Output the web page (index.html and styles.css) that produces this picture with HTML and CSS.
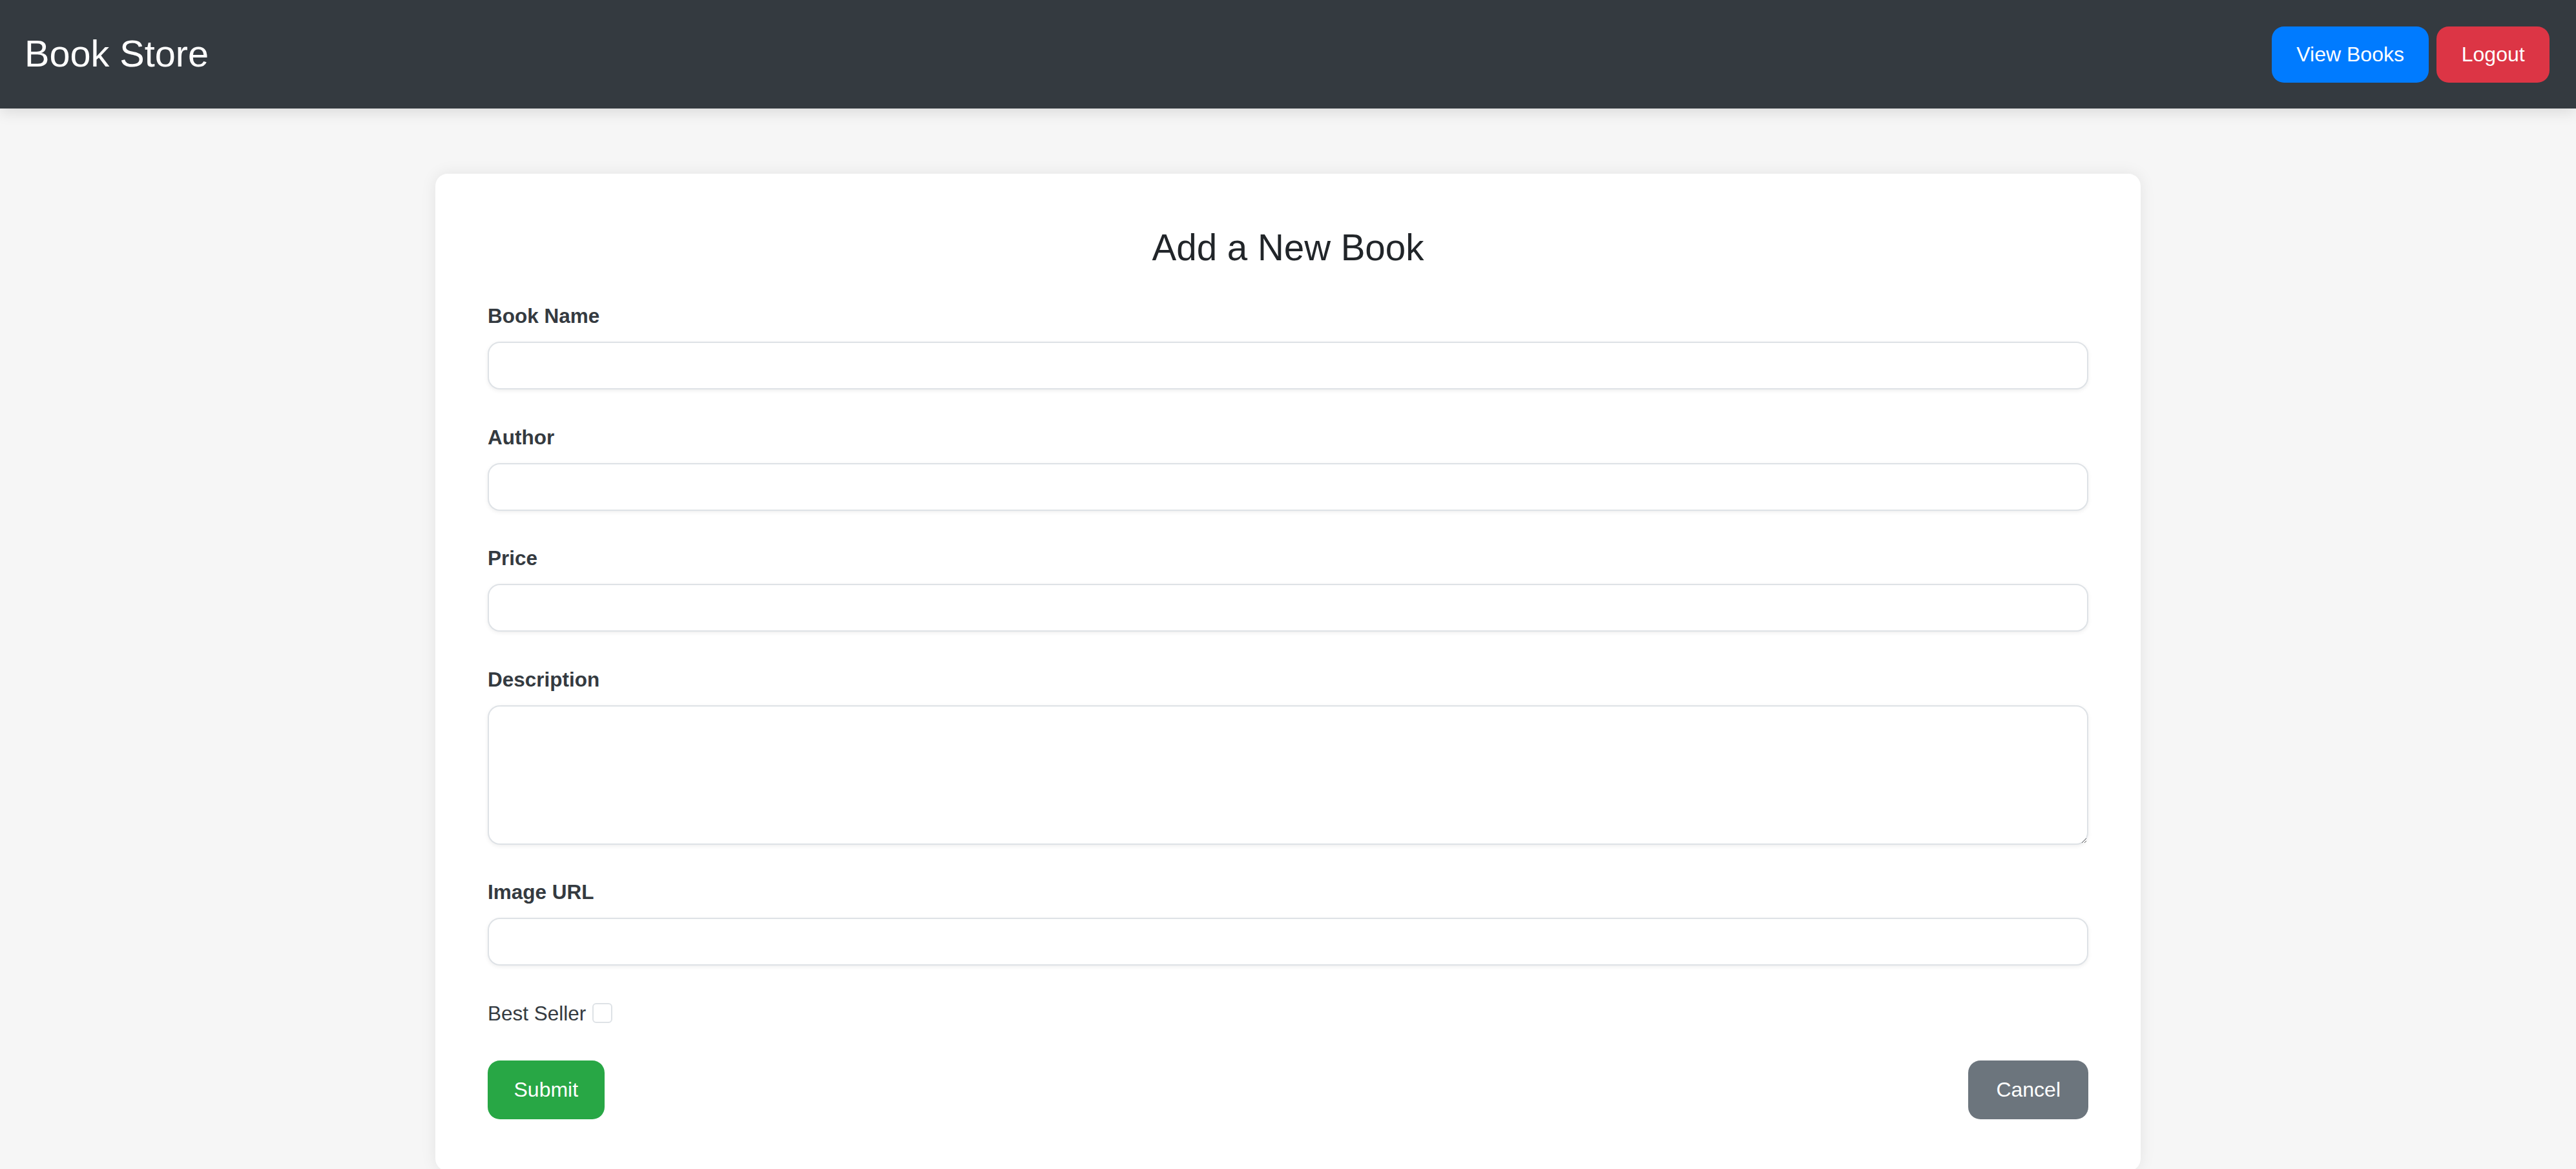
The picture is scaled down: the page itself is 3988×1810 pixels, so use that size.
FILE: index.html
```html
<!DOCTYPE html>
<html lang="en">
<head>
<meta charset="utf-8">
<title>Book Store</title>
<link rel="stylesheet" href="styles.css">
</head>
<body>
<header class="navbar">
  <div class="brand">Book Store</div>
  <nav class="nav-actions">
    <button class="btn btn-primary" type="button">View Books</button>
    <button class="btn btn-danger" type="button">Logout</button>
  </nav>
</header>
<main class="card">
  <h2 class="card-title">Add a New Book</h2>
  <form class="book-form">
    <div class="form-group">
      <label class="form-label" for="name">Book Name</label>
      <input class="form-control" id="name" type="text">
    </div>
    <div class="form-group">
      <label class="form-label" for="author">Author</label>
      <input class="form-control" id="author" type="text">
    </div>
    <div class="form-group">
      <label class="form-label" for="price">Price</label>
      <input class="form-control" id="price" type="text">
    </div>
    <div class="form-group">
      <label class="form-label" for="desc">Description</label>
      <textarea class="form-control form-textarea" id="desc"></textarea>
    </div>
    <div class="form-group">
      <label class="form-label" for="img">Image URL</label>
      <input class="form-control" id="img" type="text">
    </div>
    <div class="form-group check-row">
      <label class="check-label" for="best">Best Seller</label><input class="check-box" id="best" type="checkbox">
    </div>
    <div class="form-actions">
      <button class="btn btn-success btn-lg" type="submit">Submit</button>
      <button class="btn btn-secondary btn-lg btn-cancel" type="button">Cancel</button>
    </div>
  </form>
</main>
</body>
</html>
```
FILE: styles.css
```css
html, body {
  margin: 0;
  padding: 0;
}
body {
  background: #f6f6f6;
  font-family: "Liberation Sans", Arial, sans-serif;
  color: #212529;
  min-height: 1810px;
  overflow: hidden;
}
.navbar {
  height: 168px;
  box-sizing: border-box;
  background: #343a40;
  display: flex;
  align-items: center;
  justify-content: space-between;
  padding: 0 41px 0 38px;
  box-shadow: 0 5px 22px rgba(0, 0, 0, 0.12);
  position: relative;
  z-index: 1;
}
.brand {
  color: #ffffff;
  font-size: 57.6px;
  line-height: 1;
}
.nav-actions {
  display: flex;
  gap: 12px;
}
.btn {
  font-family: "Liberation Sans", Arial, sans-serif;
  font-size: 32px;
  color: #ffffff;
  border: none;
  height: 87px;
  padding: 0 38.4px;
  border-radius: 19px;
  cursor: pointer;
}
.btn-primary { background: #007bff; }
.btn-danger { background: #dc3545; }
.btn-success { background: #28a745; }
.btn-secondary { background: #6c757d; }
.btn-lg {
  height: 91px;
  padding: 0 40.5px;
}
.btn-cancel {
  padding: 0 43px;
}
.card {
  display: block;
  width: 2640px;
  box-sizing: border-box;
  margin: 101px auto 0;
  padding: 81.5px 81px 80px;
  background: #ffffff;
  border-radius: 19px;
  box-shadow: 0 0 24px rgba(0, 0, 0, 0.08);
}
.card-title {
  margin: 0 0 54.5px;
  font-size: 56.5px;
  font-weight: normal;
  text-align: center;
  line-height: 66px;
  color: #212529;
}
.form-group {
  margin-bottom: 55.5px;
}
.form-label {
  display: block;
  font-size: 31.5px;
  line-height: 36px;
  font-weight: bold;
  color: #343a40;
  margin-bottom: 22px;
}
.form-control {
  display: block;
  width: 100%;
  height: 74px;
  box-sizing: border-box;
  border: 2.4px solid #dee2e6;
  border-radius: 19px;
  background: #ffffff;
  box-shadow: 0 2px 6px rgba(0, 0, 0, 0.07);
  font-family: "Liberation Sans", Arial, sans-serif;
  font-size: 32px;
  padding: 0 24px;
  margin: 0;
}
.form-textarea {
  height: 216px;
  padding: 20px 24px;
  resize: vertical;
}
.check-row {
  display: flex;
  align-items: center;
  height: 36px;
}
.check-label {
  font-size: 31.5px;
  line-height: 36px;
  color: #343a40;
}
.check-box {
  appearance: none;
  -webkit-appearance: none;
  width: 31px;
  height: 31px;
  box-sizing: border-box;
  margin: 0 0 0 9.6px;
  border: 2.4px solid #dee2e6;
  border-radius: 6px;
  background: #ffffff;
}
.form-actions {
  display: flex;
  justify-content: space-between;
  align-items: center;
}
```
